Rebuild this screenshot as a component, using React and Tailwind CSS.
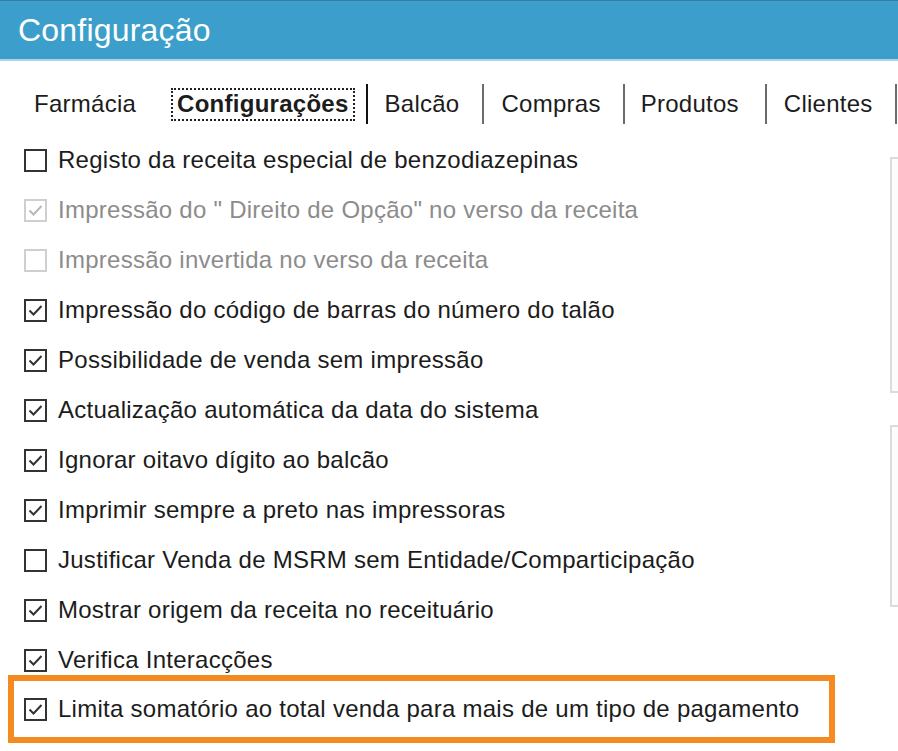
import React from 'react'

const items = [
  { label: 'Registo da receita especial de benzodiazepinas', checked: false },
  { label: 'Impressão do " Direito de Opção" no verso da receita', checked: true, disabled: true },
  { label: 'Impressão invertida no verso da receita', checked: false, disabled: true },
  { label: 'Impressão do código de barras do número do talão', checked: true },
  { label: 'Possibilidade de venda sem impressão', checked: true },
  { label: 'Actualização automática da data do sistema', checked: true },
  { label: 'Ignorar oitavo dígito ao balcão', checked: true },
  { label: 'Imprimir sempre a preto nas impressoras', checked: true },
  { label: 'Justificar Venda de MSRM sem Entidade/Comparticipação', checked: false },
  { label: 'Mostrar origem da receita no receituário', checked: true },
  { label: 'Verifica Interacções', checked: true },
]

const Box = ({ checked, disabled }) => (
  <div
    className={`w-[23px] h-[23px] shrink-0 border-2 bg-white flex items-center justify-center ${
      disabled ? 'border-[#cfcfcf]' : 'border-[#333333]'
    }`}
  >
    {checked && (
      <svg width="17" height="17" viewBox="0 0 17 17">
        <polyline
          points="2.5,8.5 6.5,12.5 14.5,4"
          fill="none"
          stroke={disabled ? '#b8b8b8' : '#333333'}
          strokeWidth="2"
        />
      </svg>
    )}
  </div>
)

const Row = ({ label, checked, disabled }) => (
  <div className="h-[50px] flex items-center pl-[24px]">
    <Box checked={checked} disabled={disabled} />
    <span className={`ml-[11px] ${disabled ? 'text-[#8c8c8c]' : 'text-[#1c1c1c]'}`}>{label}</span>
  </div>
)

const Sep = ({ dark }) => (
  <div className={`w-[2px] h-[40px] ${dark ? 'bg-[#111111]' : 'bg-[#6b6b6b]'}`} />
)

const App = () => {
  return (
    <div
      className="w-[898px] h-[751px] overflow-hidden bg-white text-[24px] tracking-[0.26px]"
      style={{ fontFamily: '"Liberation Sans", Arial, sans-serif' }}
    >
      <div className="h-[61px] bg-[#3c9fcb] border-t border-[#2f7fa3] border-b-2 border-b-[#a9d5ea] flex items-center pl-[18px]">
        <span className="text-white text-[32px] leading-none pb-[1px] tracking-[0.2px]">Configuração</span>
      </div>

      <div className="h-[74px] flex items-center pl-[34px] pt-[12px] text-[#1c1c1c]">
        <span>Farmácia</span>
        <div className="ml-[35px] border-2 border-dotted border-[#222222] px-[4px] h-[33px] flex items-center">
          <span className="font-bold">Configurações</span>
        </div>
        <div className="ml-[11px] mr-[17px]">
          <Sep dark />
        </div>
        <span>Balcão</span>
        <div className="ml-[23px] mr-[17px]">
          <Sep />
        </div>
        <span>Compras</span>
        <div className="ml-[22px] mr-[16px]">
          <Sep />
        </div>
        <span>Produtos</span>
        <div className="ml-[26px] mr-[17px]">
          <Sep />
        </div>
        <span>Clientes</span>
        <div className="ml-[22px]">
          <Sep />
        </div>
      </div>

      <div className="flex">
        <div className="flex-1 flex flex-col">
          {items.map((it) => (
            <Row key={it.label} {...it} />
          ))}
          <div className="ml-[8px] w-[827px] h-[68px] border-[6px] border-[#f58a20] flex items-center pl-[10px] -mt-[10px]">
            <Box checked />
            <span className="ml-[11px] text-[#1c1c1c]">
              Limita somatório ao total venda para mais de um tipo de pagamento
            </span>
          </div>
        </div>
        <div className="w-[8px] shrink-0 flex flex-col pt-[22px]">
          <div className="w-[40px] h-[236px] border-2 border-[#dcdcdc] bg-[#fcfcfc]" />
          <div className="w-[40px] h-[182px] mt-[32px] border-2 border-[#dcdcdc] bg-[#fcfcfc]" />
        </div>
      </div>
    </div>
  )
}

export default App
